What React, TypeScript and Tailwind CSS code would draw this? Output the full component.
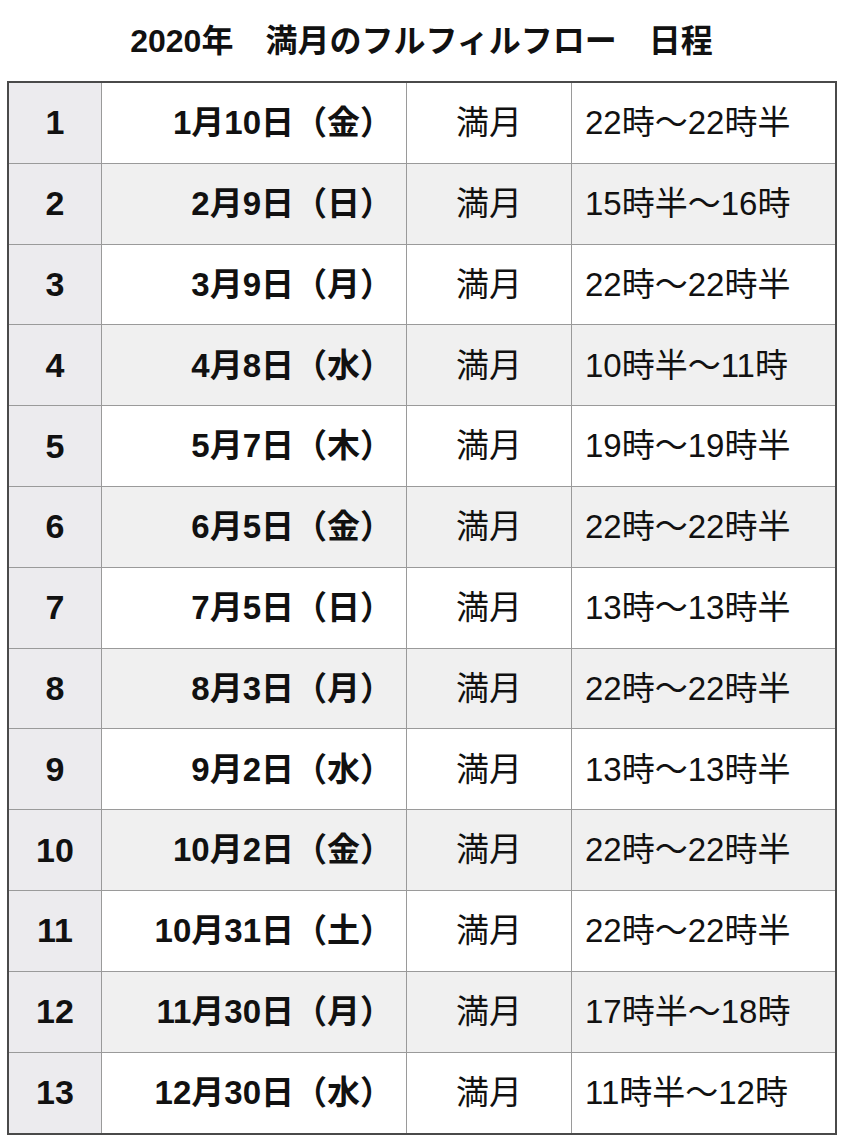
const rows = [
  ["1", "1月10日（金）", "22時～22時半"],
  ["2", "2月9日（日）", "15時半～16時"],
  ["3", "3月9日（月）", "22時～22時半"],
  ["4", "4月8日（水）", "10時半～11時"],
  ["5", "5月7日（木）", "19時～19時半"],
  ["6", "6月5日（金）", "22時～22時半"],
  ["7", "7月5日（日）", "13時～13時半"],
  ["8", "8月3日（月）", "22時～22時半"],
  ["9", "9月2日（水）", "13時～13時半"],
  ["10", "10月2日（金）", "22時～22時半"],
  ["11", "10月31日（土）", "22時～22時半"],
  ["12", "11月30日（月）", "17時半～18時"],
  ["13", "12月30日（水）", "11時半～12時"],
];

export default function App() {
  return (
    <main
      className="w-[843px] h-[1140px] bg-white text-[#111]"
      style={{ fontFamily: '"Liberation Sans", "Noto Sans CJK JP", sans-serif' }}
    >
      <div className="h-[81px] flex items-center justify-center">
        <h1 className="text-[32px] font-bold leading-none">2020年　満月のフルフィルフロー　日程</h1>
      </div>

      <div className="ml-[7px] w-[830px] border-2 border-[#4a4a4a]">
        {rows.map(([no, date, time], i) => (
          <div
            key={no}
            className={
              "grid grid-cols-[93px_305px_165px_1fr] h-[80.8px] text-[33px] " +
              (i < rows.length - 1 ? "border-b border-[#9a9a9a] " : "") +
              (i % 2 === 1 ? "bg-[#f0f0f0]" : "bg-white")
            }
          >
            <div className="bg-[#ecebee] border-r border-[#9a9a9a] flex items-center justify-center font-bold text-[34px]">
              {no}
            </div>
            <div className="border-r border-[#9a9a9a] flex items-center justify-end pr-[13px] font-bold">
              {date}
            </div>
            <div className="border-r border-[#9a9a9a] flex items-center justify-center">
              満月
            </div>
            <div className="flex items-center pl-[13px]">{time}</div>
          </div>
        ))}
      </div>
    </main>
  );
}
